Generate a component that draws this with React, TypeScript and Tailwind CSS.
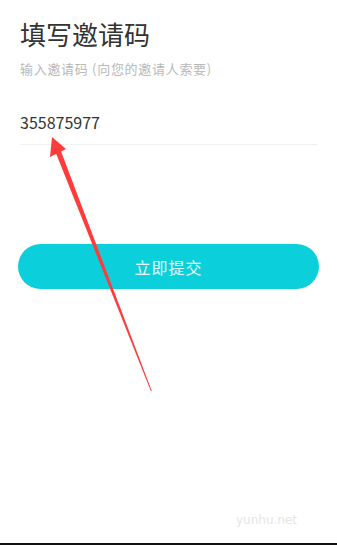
import React from 'react';

const font = { fontFamily: '"Noto Sans CJK SC", "Noto Sans", sans-serif' };

const App: React.FC = () => {
  return (
    <div className="relative w-[337px] h-[545px] bg-white flex flex-col overflow-hidden" style={font}>
      <div className="flex-1 flex flex-col px-5">
        <h1 className="mt-[16px] text-[26px] leading-[36px] text-[#333333] font-normal">填写邀请码</h1>
        <p className="mt-[8px] text-[13px] leading-[18px] tracking-[0.7px] text-[#b8b8b8]">输入邀请码 (向您的邀请人索要)</p>
        <div className="mt-[32px] pb-[10px] border-b border-[#f0f0f0]">
          <span className="text-[16px] leading-[22px] text-[#333333]">355875977</span>
        </div>
        <button className="mt-[99px] -mx-[2px] h-[45px] rounded-full bg-[#0ccfdc] text-white/90 text-[16px] tracking-[1px]">
          立即提交
        </button>
        <div className="mt-auto mb-[14px] flex justify-end pr-[20px]">
          <span className="text-[12px] text-[#e6e6e6]" style={{ fontFamily: '"DejaVu Sans", sans-serif' }}>yunhu.net</span>
        </div>
      </div>
      <div className="h-[2px] bg-[#111111]" />
      <svg className="absolute left-0 top-0 pointer-events-none" width="337" height="545" viewBox="0 0 337 545">
        <polygon points="52,137 50,157 66,149" fill="#ff3b3b" />
        <polygon points="55.5,152 60.5,150 151.8,391 150.8,391" fill="#ff3b3b" />
      </svg>
    </div>
  );
};

export default App;
